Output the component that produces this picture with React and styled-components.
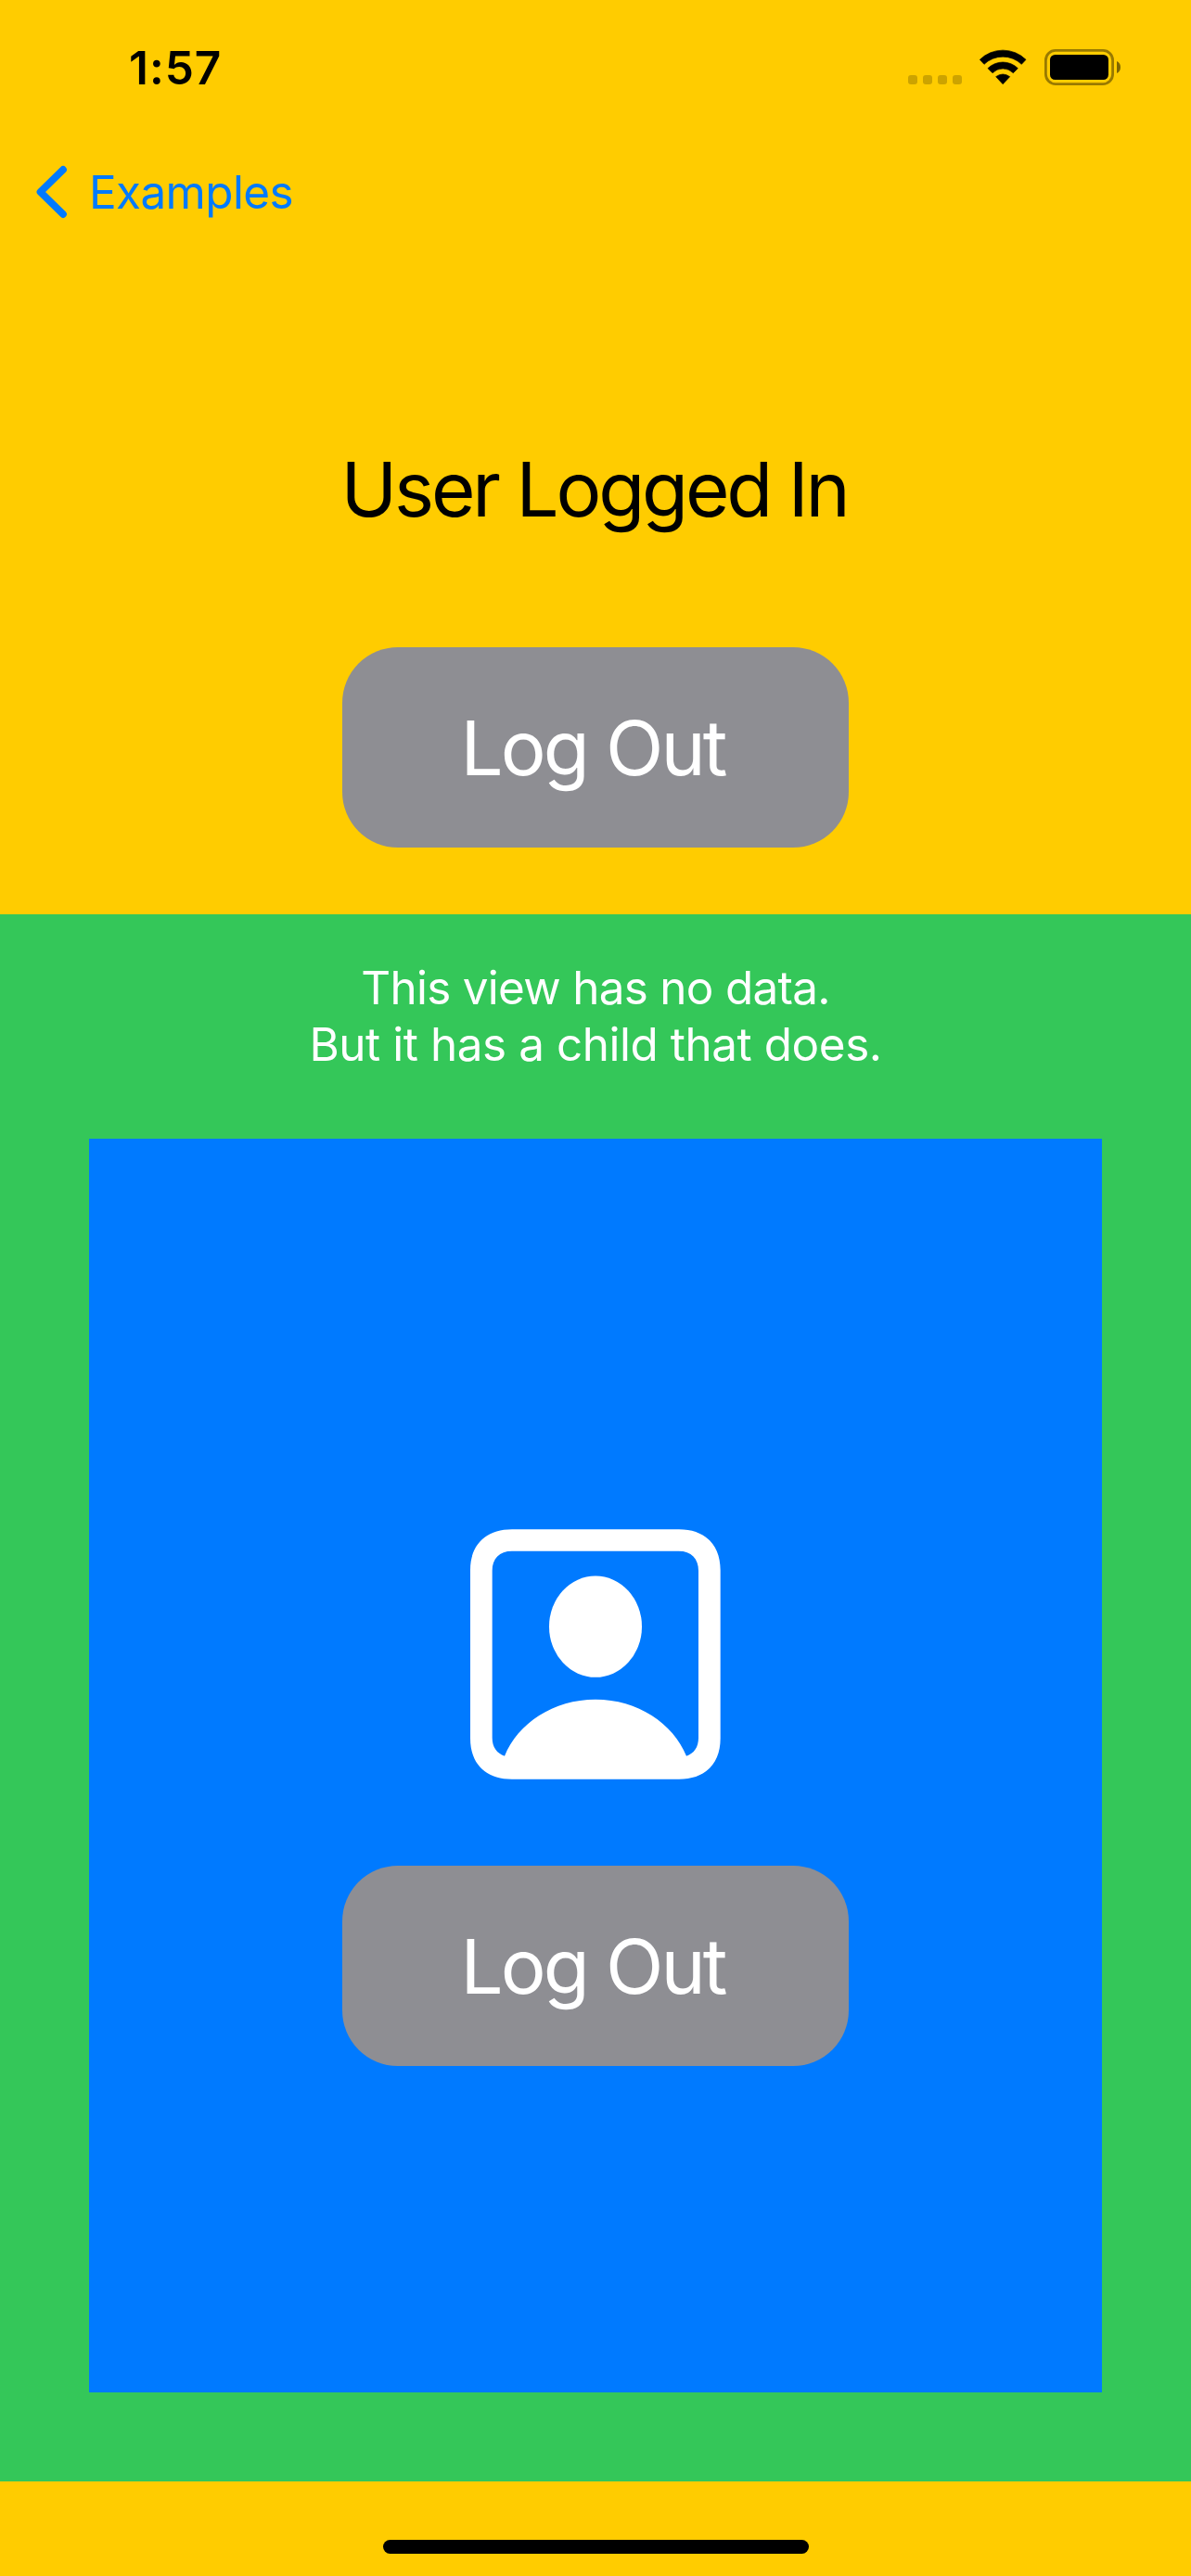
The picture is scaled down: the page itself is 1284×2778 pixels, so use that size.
import React from "react";
import styled, { createGlobalStyle } from "styled-components";

const color = {
  yellow: "#ffcc00",
  green: "#34c759",
  blue: "#007aff",
  gray: "#8e8e93",
};

const GlobalStyle = createGlobalStyle`
  *, *::before, *::after { box-sizing: border-box; }
  body { margin: 0; background: ${color.yellow}; }
`;

const Screen = styled.div`
  display: flex;
  flex-direction: column;
  width: 1284px;
  height: 2778px;
  background: ${color.yellow};
  font-family: Inter, "Liberation Sans", sans-serif;
  overflow: hidden;
`;

const StatusBar = styled.header`
  display: flex;
  justify-content: space-between;
  align-items: center;
  height: 141px;
  padding: 5px 76px 0 139px;
`;

const Time = styled.time`
  font-size: 49.5px;
  font-weight: 600;
  line-height: 60px;
  letter-spacing: 1px;
  color: #000;
`;

const StatusIcons = styled.div`
  display: flex;
  align-items: flex-start;
  height: 40px;
`;

const CellularDots = styled.div`
  display: flex;
  gap: 6px;
  align-self: flex-end;
  margin: 0 18px 2px 0;
`;

const Dot = styled.span`
  width: 10px;
  height: 10px;
  border-radius: 3px;
  background: rgba(0, 0, 0, 0.2);
`;

const WifiGlyph = styled.svg`
  width: 52px;
  height: 39px;
  margin-right: 19px;
`;

const BatteryGlyph = styled.svg`
  width: 82px;
  height: 39px;
`;

const NavBar = styled.nav`
  display: flex;
  align-items: center;
  height: 132px;
  padding-left: 38px;
`;

const BackButton = styled.button`
  display: flex;
  align-items: center;
  gap: 23px;
  padding: 0;
  border: 0;
  background: none;
  color: ${color.blue};
  font-family: inherit;
  font-size: 49.4px;
  line-height: 60px;
  letter-spacing: -0.6px;
`;

const Chevron = styled.svg`
  width: 35px;
  height: 58px;
`;

const Session = styled.section`
  display: flex;
  flex-direction: column;
  align-items: center;
  gap: 120px;
  height: 713px;
  padding-top: 205px;
`;

const Title = styled.h1`
  margin: 0;
  padding-right: 3px;
  font-size: 81.6px;
  font-weight: 400;
  line-height: 100px;
  letter-spacing: -3.2px;
  white-space: nowrap;
  color: #000;
`;

const ActionButton = styled.button`
  width: 546px;
  height: 216px;
  padding: 2px 6px 0 0;
  border: 0;
  border-radius: 60px;
  background: ${color.gray};
  color: #fff;
  font-family: inherit;
  font-size: 81.6px;
  line-height: 100px;
  letter-spacing: -2.9px;
  white-space: nowrap;
`;

const ParentView = styled.main`
  display: flex;
  flex-direction: column;
  gap: 71px;
  height: 1690px;
  padding: 49px 96px 96px;
  background: ${color.green};
`;

const Message = styled.p`
  margin: 0;
  color: #fff;
  font-size: 49.4px;
  line-height: 61px;
  text-align: center;
`;

const Line = styled.span`
  display: block;
  letter-spacing: ${(p) => p.$tracking}px;
`;

const ChildView = styled.section`
  display: flex;
  flex: 1;
  flex-direction: column;
  align-items: center;
  gap: 93px;
  padding-top: 421px;
  background: ${color.blue};
`;

const PersonGlyph = styled.svg`
  width: 270px;
  height: 270px;
`;

const Footer = styled.footer`
  display: flex;
  flex: 1;
  justify-content: center;
  align-items: flex-end;
  padding: 0 0 24px 1px;
`;

const HomeIndicator = styled.div`
  width: 459px;
  height: 15px;
  border-radius: 8px;
  background: #000;
`;

function Wifi() {
  return (
    <WifiGlyph viewBox="286 69 156 117" aria-hidden="true">
      <g fill="#000" stroke="#000" strokeWidth="2" strokeLinejoin="round">
        <path d="M290 103A106 106 0 0 1 439 103L425 118A87 87 0 0 0 304 118Z" />
        <path d="M316 131A69 69 0 0 1 413 131L398 146A47 47 0 0 0 331 146Z" />
        <path d="M342 158Q364.500 142 387 158L364.500 182Z" />
      </g>
    </WifiGlyph>
  );
}

function Battery() {
  return (
    <BatteryGlyph viewBox="0 0 82 39" aria-hidden="true">
      <rect x="1.400" y="1.400" width="72.200" height="36.200" rx="10.500" fill="none" stroke="#000" strokeOpacity="0.4" strokeWidth="2.800" />
      <rect x="6" y="6" width="63" height="27" rx="5.500" fill="#000" />
      <path d="M78 13C80.500 14 82 16.500 82 19.500S80.500 25 78 26Z" fill="#000" fillOpacity="0.5" />
    </BatteryGlyph>
  );
}

function Person() {
  return (
    <PersonGlyph viewBox="51 57 810 810" aria-hidden="true">
      <path
        fill="#fff"
        fillRule="evenodd"
        d="M186 58H726C810 58 860 108 860 190V734C860 816 810 866 726 866H186C101 866 51 816 51 734V190C51 108 101 58 186 58ZM186 128C145 128 122 152 122 192V732C122 762 137 783 162 791C205 685 320 608 456 608C592 608 707 685 750 791C775 783 789 762 789 732V192C789 152 766 128 725 128Z"
      />
      <ellipse cx="456" cy="372.500" rx="150" ry="164" fill="#fff" />
    </PersonGlyph>
  );
}

export default function App() {
  return (
    <>
      <GlobalStyle />
      <Screen>
        <StatusBar>
          <Time>1:57</Time>
          <StatusIcons>
            <CellularDots>
              <Dot />
              <Dot />
              <Dot />
              <Dot />
            </CellularDots>
            <Wifi />
            <Battery />
          </StatusIcons>
        </StatusBar>
        <NavBar>
          <BackButton>
            <Chevron viewBox="0 0 35 58" aria-hidden="true">
              <path d="M30 5L5.500 29L30 53" fill="none" stroke="currentColor" strokeWidth="7.800" strokeLinecap="round" strokeLinejoin="round" />
            </Chevron>
            Examples
          </BackButton>
        </NavBar>
        <Session>
          <Title>User Logged In</Title>
          <ActionButton>Log Out</ActionButton>
        </Session>
        <ParentView>
          <Message>
            <Line $tracking={-0.7}>This view has no data.</Line>
            <Line $tracking={-0.43}>But it has a child that does.</Line>
          </Message>
          <ChildView>
            <Person />
            <ActionButton>Log Out</ActionButton>
          </ChildView>
        </ParentView>
        <Footer>
          <HomeIndicator />
        </Footer>
      </Screen>
    </>
  );
}
